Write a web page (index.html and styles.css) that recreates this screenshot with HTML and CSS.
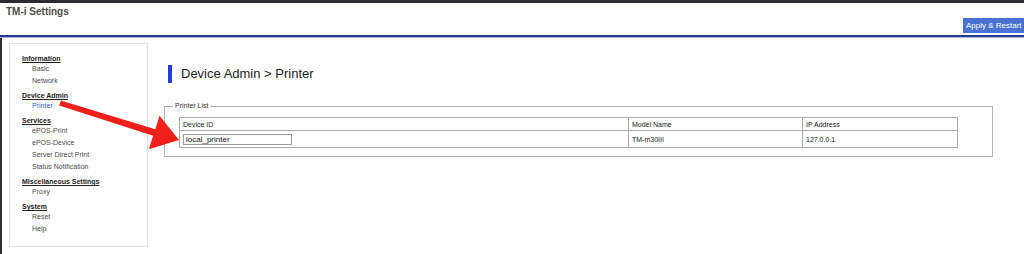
FILE: index.html
```html
<!DOCTYPE html>
<html>
<head>
<meta charset="utf-8">
<title>TM-i Settings</title>
<link rel="stylesheet" href="styles.css">
</head>
<body>
<div class="topbar"></div>
<header class="header">
  <div class="brand">TM-i Settings</div>
  <div class="actions"><button class="apply">Apply &amp; Restart</button></div>
</header>
<div class="body">
  <nav class="sidebar">
    <div class="group">
      <div class="heading">Information</div>
      <div class="item">Basic</div>
      <div class="item">Network</div>
    </div>
    <div class="group">
      <div class="heading">Device Admin</div>
      <div class="item active">Printer</div>
    </div>
    <div class="group">
      <div class="heading">Services</div>
      <div class="item">ePOS-Print</div>
      <div class="item">ePOS-Device</div>
      <div class="item">Server Direct Print</div>
      <div class="item">Status Notification</div>
    </div>
    <div class="group">
      <div class="heading">Miscellaneous Settings</div>
      <div class="item">Proxy</div>
    </div>
    <div class="group">
      <div class="heading">System</div>
      <div class="item">Reset</div>
      <div class="item">Help</div>
    </div>
  </nav>
  <main class="content">
    <div class="title-row">
      <span class="title-bar"></span>
      <h1 class="title">Device Admin &gt; Printer</h1>
    </div>
    <fieldset class="printer-list">
      <legend>Printer List</legend>
      <table class="grid">
        <colgroup>
          <col class="c1"><col class="c2"><col class="c3">
        </colgroup>
        <tr class="head">
          <td>Device ID</td><td>Model Name</td><td>IP Address</td>
        </tr>
        <tr class="data">
          <td><input class="id-input" type="text" value="local_printer"></td>
          <td>TM-m30III</td>
          <td>127.0.0.1</td>
        </tr>
      </table>
    </fieldset>
  </main>
</div>
<svg class="arrow" width="1024" height="254" viewBox="0 0 1024 254">
  <polygon fill="#f2201c" points="59.2,105.4 60.8,100.6 155.3,129.2 159.5,115.8 179,140 148.9,149.2 153.1,135.8"/>
</svg>
</body>
</html>
```

FILE: styles.css
```css
* { box-sizing: border-box; }
html, body { margin: 0; padding: 0; }
body {
  width: 1024px;
  height: 254px;
  overflow: hidden;
  background: #fff;
  font-family: "Liberation Sans", Arial, Helvetica, sans-serif;
  color: #333;
  position: relative;
}
.topbar { height: 3px; background: #2c2c31; }
.header {
  height: 34px;
  border-bottom: 2px solid #2b3a8e;
  box-shadow: 0 1px 0 #aab2d8;
  display: flex;
  flex-direction: column;
  justify-content: space-between;
}
.brand {
  font-size: 10px;
  font-weight: bold;
  color: #4c4c4c;
  padding: 3px 0 0 6px;
  line-height: 12px;
}
.actions { display: flex; justify-content: flex-end; }
.apply {
  font-family: inherit;
  font-size: 8px;
  color: #fff;
  background: #4a72d2;
  border: none;
  height: 15px;
  width: 61px;
  padding: 0 0 0 3px;
  text-align: left;
  white-space: nowrap;
  overflow: hidden;
  margin-bottom: 2px;
}
.body {
  display: flex;
  align-items: flex-start;
  padding-left: 7px;
  border-left: 2px solid #2c2c31;
  height: 217px;
  margin-top: 1px;
}
.sidebar {
  margin-top: 5px;
  width: 139px;
  height: 204px;
  border: 1px solid #e4e4e4;
  padding: 11px 0 0 12px;
}
.group + .group { margin-top: 5px; }
.heading {
  font-size: 7px;
  font-weight: bold;
  text-decoration: underline;
  color: #222;
  line-height: 8px;
}
.item {
  font-size: 7px;
  color: #4a4a4a;
  line-height: 12px;
  padding-left: 10px;
}
.item.active { color: #2f62e0; }
.content { margin-left: 16px; }
.title-row {
  display: flex;
  align-items: center;
  margin-top: 27px;
  margin-left: 4px;
}
.title-bar {
  width: 4px;
  height: 18px;
  background: #1f3fe0;
}
.title {
  margin: 0 0 0 9px;
  font-size: 13px;
  font-weight: normal;
  color: #222;
  line-height: 18px;
}
.printer-list {
  margin: 19px 0 0 0;
  width: 828px;
  border: 1px solid #b4b4b4;
  padding: 7px 34px 8px 14px;
}
.printer-list legend {
  font-size: 7px;
  line-height: 8px;
  color: #333;
  padding: 0 2px;
  margin-left: -6px;
}
.grid {
  border-collapse: collapse;
  width: 778px;
  table-layout: fixed;
}
.c1 { width: 449px; }
.c2 { width: 174px; }
.c3 { width: 155px; }
.grid td {
  border: 1px solid #ababab;
  font-size: 7px;
  color: #222;
  padding: 0 3px;
}
.head td { height: 13px; }
.data td { height: 17px; }
.id-input {
  display: block;
  width: 109px;
  height: 11px;
  border: 1px solid #9a9a9a;
  font-family: inherit;
  font-size: 8px;
  padding: 0 2px;
  color: #111;
  margin: 0;
}
.arrow {
  position: absolute;
  left: 0;
  top: 0;
  pointer-events: none;
}
```
